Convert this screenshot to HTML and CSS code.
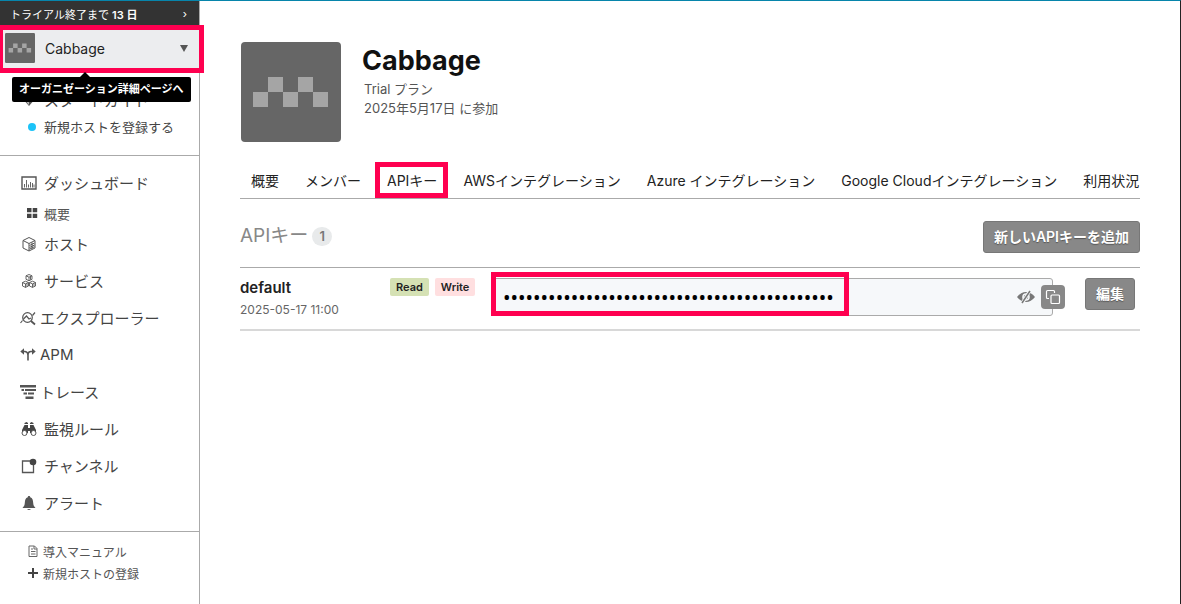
FILE: index.html
```html
<!DOCTYPE html>
<html lang="ja">
<head>
<meta charset="utf-8">
<title>Cabbage - APIキー</title>
<link rel="stylesheet" href="styles.css">
</head>
<body>
<div class="app">
  <aside class="sidebar">
    <a class="trial" href="#"><span>トライアル終了まで <b>13 日</b></span><span class="trial-arrow">›</span></a>
    <div class="org">
      <a class="org-link" href="#">
        <svg class="org-icon" viewBox="0 0 100 100" aria-hidden="true"><rect width="100" height="100" rx="4" fill="#666"/><path fill="#a5a5a5" d="M12 50h15v15H12zM27 35h15v15H27zM42 50h15v15H42zM57 35h15v15H57zM72 50h15v15H72z"/></svg>
        <span class="org-name">Cabbage</span>
        <svg class="caret" viewBox="0 0 8 7" aria-hidden="true"><path d="M0 0h8L4 7z"/></svg>
      </a>
      <span class="tooltip">オーガニゼーション詳細ページへ</span>
      <span class="mark mark-org"></span>
    </div>
    <nav class="start">
      <a class="start-guide" href="#"><svg class="icon" viewBox="0 0 16 16" aria-hidden="true"><path fill="#555" d="M8 1l6 6-6 7-6-7z"/><path fill="#bbb" d="M8 8v5L4 8z"/></svg>スタートガイド</a>
      <a class="start-host" href="#"><span class="dot"></span>新規ホストを登録する</a>
    </nav>
    <nav class="menu">
      <a class="item" href="#"><svg class="icon" viewBox="0 0 16 16" aria-hidden="true"><path fill="none" stroke="#555" stroke-width="1.4" d="M1 2h14v12H1z"/><path fill="none" stroke="#666" d="M3.5 12.5V9M5.5 12.5V5M7.500 12.500V9.500M9.500 12.500V7M11.500 12.500V8M13 12.500V9.500"/></svg>ダッシュボード</a>
      <a class="item sub" href="#"><svg class="icon small" viewBox="0 0 12 12" aria-hidden="true"><path fill="#444" d="M1 1h4.500v4.200H1zM6.700 1h4.500v4.200H6.700zM1 6.700h4.500v4.200H1zM6.700 6.700h4.500v4.200H6.700z"/></svg>概要</a>
      <a class="item" href="#"><svg class="icon" viewBox="0 0 16 16" aria-hidden="true"><path fill="none" stroke="#555" stroke-linejoin="round" d="M8 1.500l6 3v7.500l-6 3-6-3V4.500zM2 4.500l6 3 6-3M8 7.500V15M8.500 9.500l5-2.500M8.500 11.500l5-2.500M8.500 13.200l5-2.500M11 6.500v6.500"/></svg>ホスト</a>
      <a class="item" href="#"><svg class="icon" viewBox="0 0 16 16" aria-hidden="true"><g fill="none" stroke="#555" stroke-width=".9" stroke-linejoin="round"><path id="cube" d="M8 1.500l3 1.300v3.500L8 7.700 5 6.300V2.800zM5 2.800L8 4.200l3-1.400M8 4.200v3.500M9.500 3.700v3"/><use href="#cube" x="-3.500" y="6.700"/><use href="#cube" x="3.500" y="6.700"/></g></svg>サービス</a>
      <a class="item wide" href="#"><svg class="icon" viewBox="0 0 16 16" aria-hidden="true"><g fill="none" stroke="#555" stroke-width="1.200"><circle cx="7.500" cy="7.500" r="4.800"/><path d="M.5 13L2.500 10.500M3.500 9l3-3L9 9l2-1M12.500 5.500L15 2.500"/><path stroke-width="1.800" d="M11 11l4 3.500"/></g></svg>エクスプローラー</a>
      <a class="item wide" href="#"><svg class="icon" viewBox="0 0 16 16" aria-hidden="true"><path fill="none" stroke="#555" stroke-width="1.600" d="M3 4.500h2Q8 5 8 8v5.500V8q0-3.500 3-3.500h2"/><path fill="#555" d="M4 1.300v6.400L.3 4.500zM12 1.300v6.400l3.700-3.200z"/></svg>APM</a>
      <a class="item wide" href="#"><svg class="icon" viewBox="0 0 16 16" aria-hidden="true"><path fill="#555" d="M0 1h16v2.500H0zM1.500 5H4v2H1.500zM5 5h11v2H5zM3.500 8.500H7v2H3.500zM8 8.500h6v2H8zM5.500 12.500h8V15h-8z"/></svg>トレース</a>
      <a class="item" href="#"><svg class="icon" viewBox="0 0 16 16" aria-hidden="true"><path fill="#444" d="M3.500 4H7v8H1V9zM12.500 4H9v8h6V9zM7 7h2v3H7zM3.500 2l2-1L7 2v1H3.500zM9 2l1.500-1 2 1v1H9z"/><g fill="#fff" stroke="#555"><circle cx="3.500" cy="12" r="2.500"/><circle cx="12.500" cy="12" r="2.500"/></g></svg>監視ルール</a>
      <a class="item" href="#"><svg class="icon" viewBox="0 0 16 16" aria-hidden="true"><path fill="none" stroke="#555" stroke-width="1.300" d="M10 3H1.500v11.500h11V6"/><circle cx="12" cy="4" r="3.300" fill="#444"/></svg>チャンネル</a>
      <a class="item" href="#"><svg class="icon" viewBox="0 0 16 16" aria-hidden="true"><path fill="#555" d="M8 1c.8 0 1.200.5 1.200 1.200C11.500 3 12 5 12.200 8c.1 2 .8 3.500 2.300 5H1.500C3 11.500 3.700 10 3.800 8 4 5 4.500 3 6.800 2.200 6.800 1.500 7.200 1 8 1zM6 14h4q-2 2-4 0z"/></svg>アラート</a>
    </nav>
    <nav class="links">
      <a href="#"><svg class="icon small" viewBox="0 0 12 12" aria-hidden="true"><path fill="none" stroke="#666" d="M2 1h5.500L10 3.500V11.500H2zM7 1v3h3M4 4h2M4 6.500h4.500M4 9h4.500"/></svg>導入マニュアル</a>
      <a href="#"><svg class="icon small" viewBox="0 0 12 12" aria-hidden="true"><path fill="none" stroke="#444" stroke-width="2" d="M6 1v10M1 6h10"/></svg>新規ホストの登録</a>
    </nav>
  </aside>
  <main class="main">
    <header class="profile">
      <svg class="avatar" viewBox="0 0 100 100" aria-hidden="true"><rect width="100" height="100" rx="4" fill="#666"/><path fill="#a5a5a5" d="M12 50h15v15H12zM27 35h15v15H27zM42 50h15v15H42zM57 35h15v15H57zM72 50h15v15H72z"/></svg>
      <div class="profile-text">
        <h1>Cabbage</h1>
        <p>Trial プラン</p>
        <p>2025年5月17日 に参加</p>
      </div>
    </header>
    <nav class="tabs">
      <a href="#">概要</a>
      <a href="#">メンバー</a>
      <a class="active" href="#">APIキー<span class="mark mark-tab"></span></a>
      <a href="#">AWSインテグレーション</a>
      <a href="#">Azure インテグレーション</a>
      <a href="#">Google Cloudインテグレーション</a>
      <a href="#">利用状況</a>
    </nav>
    <div class="section-head">
      <h2>APIキー</h2><span class="count">1</span>
      <button class="btn" type="button">新しいAPIキーを追加</button>
    </div>
    <section class="key-row">
      <div class="key-name"><h3>default</h3><time>2025-05-17 11:00</time></div>
      <div class="tags"><span class="tag read">Read</span><span class="tag write">Write</span></div>
      <div class="key-field">
        <input class="key-input" type="password" aria-label="APIキー" readonly value="abcdefghijklmnopqrstuvwxyzabcdefghijklmnopqr">
        <button class="eye" type="button" aria-label="表示"><svg viewBox="0 0 18 14" aria-hidden="true"><path fill="#777" d="M0 7Q4 2 9 2t9 5q-4 5-9 5T0 7z"/><circle cx="9" cy="7" r="3.800" fill="#f6f8fa"/><circle cx="9" cy="7" r="2.200" fill="#777"/><path stroke="#f6f8fa" stroke-width="3.400" d="M5 13.500L13 .5"/><path stroke="#777" stroke-width="1.500" d="M5 13L13 1"/></svg></button>
        <button class="copy" type="button" aria-label="コピー"><svg viewBox="0 0 24 24" aria-hidden="true"><g fill="none" stroke="#fff" stroke-width="1.200"><path d="M8 13.500H6.500a1 1 0 0 1-1-1v-6a1 1 0 0 1 1-1h6a1 1 0 0 1 1 1V8"/><rect x="10" y="10" width="8.500" height="8.500" rx="1"/></g></svg></button>
        <span class="mark mark-key"></span>
      </div>
      <button class="btn edit" type="button">編集</button>
    </section>
  </main>
</div>
</body>
</html>
```
FILE: styles.css
```css
* { box-sizing: border-box; }
body {
  margin: 0;
  font-family: Inter, "Noto Sans CJK JP", sans-serif;
  font-size: 14px;
  color: #222;
  background: #fff;
}
a { color: inherit; text-decoration: none; }
h1, h2, h3, p { margin: 0; }
button, input { font: inherit; }
.app {
  display: flex;
  min-height: 100vh;
  border-top: 1px solid #0785ab;
  border-right: 1px solid #222;
}
.mark {
  position: absolute;
  border: 5px solid #ff0050;
  pointer-events: none;
}

/* Sidebar */
.sidebar {
  flex: none;
  width: 200px;
  border-right: 1px solid #aaa;
  color: #444;
}
.trial {
  display: flex;
  justify-content: space-between;
  align-items: center;
  height: 26px;
  padding: 0 12px 0 10px;
  background: #333;
  color: #fff;
  font-size: 11px;
}
.trial b { font-weight: 600; }
.trial-arrow { line-height: 14px; }
.org { position: relative; }
.org-link {
  display: flex;
  align-items: center;
  gap: 10px;
  height: 42px;
  padding: 0 11px 0 5px;
  background: #ecedef;
  color: #222;
}
.org-icon { width: 30px; height: 30px; }
.org-name { flex: 1; }
.caret { width: 8px; height: 7px; fill: #555; }
.mark-org { top: -2px; left: -2px; right: -5px; bottom: -4px; }
.tooltip {
  position: absolute;
  z-index: 1;
  top: 50px;
  left: 12px;
  padding: 0 7px;
  border-radius: 2px;
  background: #000;
  color: #fff;
  font-size: 11px;
  font-weight: 600;
  line-height: 25px;
  white-space: nowrap;
}
.tooltip::before {
  content: "";
  position: absolute;
  top: -5px;
  left: 67px;
  border: 6px solid transparent;
  border-top: 0;
  border-bottom-color: #000;
}
.icon { flex: none; width: 16px; height: 16px; }
.icon.small { width: 12px; height: 12px; }
.start {
  padding: 17px 0 15px 21px;
  border-bottom: 1px solid #aaa;
}
.start a { display: flex; align-items: center; height: 27px; }
.start-guide { gap: 7px; font-size: 15px; }
.start-host { padding-left: 7px; gap: 8px; font-size: 13px; }
.dot { width: 8px; height: 8px; border-radius: 50%; background: #1cc3f8; }
.menu {
  padding: 8px 0 10px 21px;
  border-bottom: 1px solid #aaa;
}
.item {
  display: flex;
  align-items: center;
  gap: 7px;
  height: 37px;
  font-size: 15px;
}
.item.sub { height: 24px; padding-left: 5px; gap: 6px; font-size: 13px; color: #555; }
.item.wide { gap: 4px; margin-left: -1px; }
.links { padding: 8px 0 0 27px; font-size: 12px; color: #555; }
.links a { display: flex; align-items: center; gap: 4px; height: 22px; }

/* Main column */
.main { flex: 1; min-width: 0; padding: 41px 40px 0; }
.profile { display: flex; gap: 21px; padding-left: 1px; }
.avatar { flex: none; width: 100px; height: 100px; }
.profile-text p { padding-left: 2px; font-size: 13px; line-height: 19px; color: #555; }
h1 { font-size: 27px; line-height: 38px; color: #111; }
.tabs {
  display: flex;
  gap: 26px;
  height: 57px;
  padding: 21px 0 0 11px;
  border-bottom: 1px solid #aaa;
  white-space: nowrap;
}
.tabs a { position: relative; line-height: 36px; }
.mark-tab { top: -1px; left: -12px; right: -11px; bottom: 0; }
.section-head { display: flex; align-items: center; height: 68px; padding-top: 7px; }
h2 { font-size: 19px; font-weight: 400; line-height: 30px; padding-bottom: 2px; color: #888; }
.count {
  width: 20px;
  margin-left: 4px;
  border-radius: 10px;
  background: #e8eaeb;
  color: #777;
  font-size: 13px;
  font-weight: 600;
  line-height: 19px;
  text-align: center;
}
.btn {
  height: 32px;
  margin-left: auto;
  padding: 0 10px 2px;
  border: 1px solid #777;
  border-radius: 3px;
  background: #888;
  color: #fff;
  font-weight: 600;
  text-shadow: 0 1px 1px #555;
  white-space: nowrap;
}
.key-row {
  display: flex;
  align-items: flex-start;
  height: 64px;
  padding: 10px 5px 0 0;
  border-top: 1px solid #aaa;
  border-bottom: 2px solid #d8d8d8;
}
.key-name { width: 150px; }
h3 { font-size: 15px; font-weight: 600; line-height: 20px; }
.key-name time { display: block; font-size: 12px; line-height: 24px; color: #666; }
.tags { display: flex; gap: 6px; width: 101px; }
.tag {
  padding: 0 6px;
  border-radius: 2px;
  font-size: 11px;
  font-weight: 600;
  line-height: 18px;
}
.read { background: #d5e1b4; }
.write { background: #ffdfe0; }
.key-field { position: relative; flex: 1; margin-right: 32px; }
.key-input {
  display: block;
  width: 100%;
  height: 38px;
  padding: 0 60px 0 11px;
  border: 1px solid #aaa;
  border-radius: 3px;
  background: #f6f8fa;
  color: #000;
  font-family: "Noto Sans", sans-serif;
  font-size: 20px;
}
.eye, .copy { position: absolute; padding: 0; border: 0; }
.eye { top: 12px; right: 18px; width: 18px; height: 14px; background: none; }
.copy { top: 7px; right: -12px; width: 24px; height: 24px; border-radius: 4px; background: #888; }
.eye svg, .copy svg { display: block; width: 100%; height: 100%; }
.mark-key { top: -6px; left: 0; width: 358px; bottom: 0; }
.edit { width: 50px; margin-left: 0; }
```
